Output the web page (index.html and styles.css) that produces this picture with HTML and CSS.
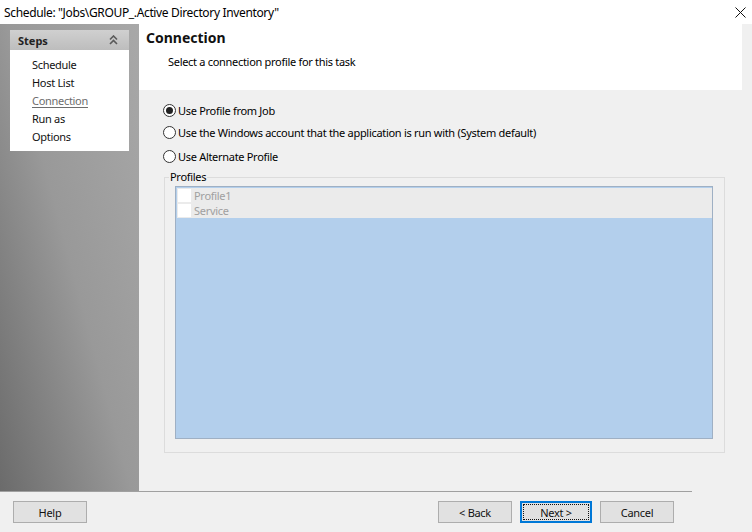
FILE: index.html
```html
<!DOCTYPE html>
<html>
<head>
<meta charset="utf-8">
<link rel="stylesheet" href="styles.css">
</head>
<body>
<div class="window">
  <div class="titlebar">
    <span class="title">Schedule: "Jobs\GROUP_.Active Directory Inventory"</span>
    <svg class="close" width="11" height="11" viewBox="0 0 11 11"><path d="M0.5 0.5 L10.5 10.5 M10.5 0.5 L0.5 10.5" stroke="#111" stroke-width="1" fill="none"/></svg>
  </div>
  <div class="main">
    <aside class="sidebar">
      <div class="steps">
        <div class="steps-head">
          <span>Steps</span>
          <svg width="9" height="10" viewBox="0 0 9 10"><path d="M1 4.5 L4.5 1 L8 4.5 M1 9 L4.5 5.5 L8 9" stroke="#5a5a5a" stroke-width="1.6" fill="none"/></svg>
        </div>
        <ul class="steps-list">
          <li>Schedule</li>
          <li>Host List</li>
          <li class="current">Connection</li>
          <li>Run as</li>
          <li>Options</li>
        </ul>
      </div>
    </aside>
    <section class="content">
      <header class="page-head">
        <h1>Connection</h1>
        <p>Select a connection profile for this task</p>
      </header>
      <div class="options">
        <label class="radio"><span class="dot checked"></span>Use Profile from Job</label>
        <label class="radio r2"><span class="dot"></span>Use the Windows account that the application is run with (System default)</label>
        <label class="radio r3"><span class="dot"></span>Use Alternate Profile</label>
      </div>
      <fieldset class="group">
        <legend>Profiles</legend>
        <div class="listbox">
          <div class="item"><span class="check"></span>Profile1</div>
          <div class="item"><span class="check"></span>Service</div>
        </div>
      </fieldset>
    </section>
  </div>
  <div class="separator"></div>
  <footer class="footer">
    <button class="btn">Help</button>
    <div class="nav">
      <button class="btn">&lt; Back</button>
      <button class="btn default"><span>Next &gt;</span></button>
      <button class="btn">Cancel</button>
    </div>
  </footer>
</div>
</body>
</html>
```

FILE: styles.css
```css
* { box-sizing: border-box; }
html, body { margin: 0; padding: 0; }
body {
  width: 752px;
  height: 532px;
  overflow: hidden;
  background: #f0f0f0;
  font-family: "Noto Sans", "Open Sans", sans-serif;
  font-size: 11px;
  letter-spacing: -0.3px;
  color: #000;
}
.window { width: 752px; height: 532px; display: flex; flex-direction: column; }

.titlebar {
  height: 24px;
  background: #fff;
  display: flex;
  align-items: center;
  justify-content: space-between;
  padding: 0 6px 0 4px;
  font-size: 12px;
}
.title { letter-spacing: -0.35px; }

.main { display: flex; height: 467px; }

.sidebar {
  width: 139px;
  flex: none;
  padding: 6px 10px;
  background: linear-gradient(75deg, #6b6b6b 0%, #999999 50%, #a8a8a8 100%);
}
.steps { background: #fff; }
.steps-head {
  height: 20px;
  display: flex;
  align-items: center;
  justify-content: space-between;
  padding: 0 11px 0 8px;
  background: linear-gradient(#d0d0d0, #bdbdbd);
  font-weight: bold;
  letter-spacing: 0;
  color: #222;
}
.steps-list { list-style: none; margin: 0; padding: 6px 0 5px 22px; }
.steps-list li { height: 18px; line-height: 18px; color: #111; }
.steps-list li.current { color: #6d6d6d; text-decoration: underline; text-underline-offset: 2px; }

.content { flex: 1; display: flex; flex-direction: column; }
.page-head {
  height: 66px;
  background: #fff;
  margin-right: 10px;
  padding: 4px 7px 0;
}
.page-head h1 { margin: 0; font-size: 14px; font-weight: bold; line-height: 20px; letter-spacing: 0; color: #111; }
.page-head p { margin: 6px 0 0 22px; line-height: 16px; }

.options { padding: 11px 0 0 24px; display: flex; flex-direction: column; }
.radio { display: flex; align-items: center; height: 18px; gap: 2px; }
.radio.r2 { margin-top: 4px; }
.radio.r3 { margin-top: 6px; }
.dot {
  width: 13px; height: 13px;
  border: 1px solid #333;
  border-radius: 50%;
  background: #fff;
  display: inline-flex;
  align-items: center;
  justify-content: center;
}
.dot.checked::after { content: ""; width: 7px; height: 7px; border-radius: 50%; background: #222; }

.group {
  margin: 4px 27px 0 25px;
  border: 1px solid #dcdcdc;
  padding: 0 11px 13px 10px;
  min-width: 0;
}
.group legend { padding: 0 1px; margin-left: -6px; line-height: 16px; }
.listbox {
  height: 253px;
  margin-top: 1px;
  border: 1px solid #9fb0c4;
  background: #b3cfec;
  padding: 1px 0 0 1px;
}
.item {
  height: 15px;
  background: #ebebeb;
  display: flex;
  align-items: center;
  color: #a0a0a0;
  padding-left: 1px;
}
.check { width: 13px; height: 13px; background: #fff; margin-right: 3px; }

.separator { width: 692px; height: 1px; background: #a0a0a0; flex: none; }
.footer {
  flex: 1;
  display: flex;
  justify-content: space-between;
  align-items: flex-start;
  padding: 9px 78px 0 13px;
}
.nav { display: flex; gap: 8px; }
.btn {
  width: 74px;
  height: 22px;
  background: #e1e1e1;
  border: 1px solid #adadad;
  font-family: inherit;
  font-size: 11px;
  letter-spacing: -0.3px;
  color: #111;
  padding: 0;
}
.btn.default { width: 72px; border: 2px solid #0078d7; padding: 1px; }
.btn.default span {
  display: flex; align-items: center; justify-content: center;
  width: 100%; height: 100%;
  border: 1px dotted #111;
}
```
